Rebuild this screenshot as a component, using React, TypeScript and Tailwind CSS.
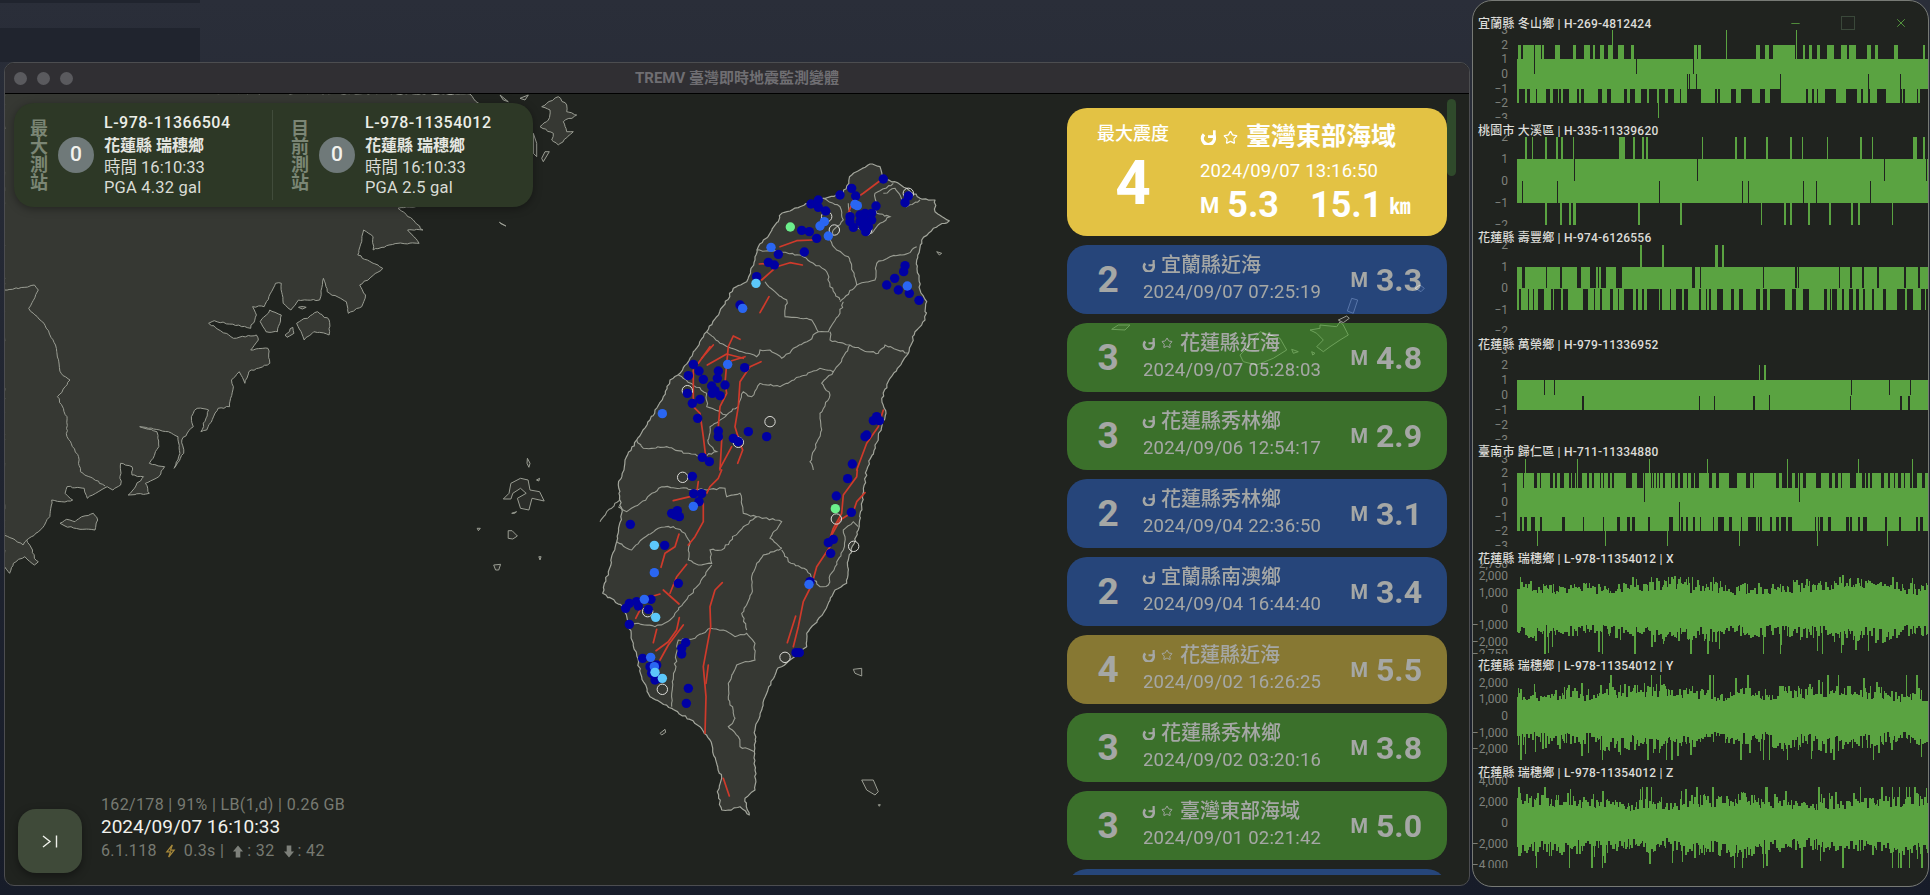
import { Star, Minus, X } from "lucide-react";

type P = [number, number];
const rng = (s: number) => () => {
  s |= 0; s = (s + 0x6d2b79f5) | 0;
  let t = Math.imul(s ^ (s >>> 15), 1 | s);
  t = (t + Math.imul(t ^ (t >>> 7), 61 | t)) ^ t;
  return ((t ^ (t >>> 14)) >>> 0) / 4294967296;
};
const pairs = (a: number[]): P[] => { const o: P[] = []; for (let i = 0; i < a.length; i += 2) o.push([a[i], a[i + 1]]); return o; };
const z6 = (a: number[]) => pairs(a).map(([x, y]): P => [600 + x / 3, 150 + y / 3]);
const z7 = (a: number[]) => pairs(a).map(([x, y]): P => [600 + x / 3, 470 + y / 3]);
const z9 = (a: number[]) => pairs(a).map(([x, y]): P => [x / 2.613, 200 + y / 3]);
const z10 = (a: number[]) => pairs(a).map(([x, y]): P => [420 + x / 3, 90 + y / 3]);
const z11 = (a: number[]) => pairs(a).map(([x, y]): P => [1090 + x / 3, 250 + y / 3]);
const z12 = (a: number[]) => pairs(a).map(([x, y]): P => [x / 3, 500 + y / 3]);

const rough = (pts: P[], seed: number, amp = 0.8, closed = false, step = 4) => {
  const r = rng(seed);
  const list = closed ? [...pts, pts[0]] : pts;
  let d = `M${list[0][0].toFixed(1)} ${list[0][1].toFixed(1)}`;
  for (let i = 1; i < list.length; i++) {
    const [x0, y0] = list[i - 1];
    const [x1, y1] = list[i];
    const len = Math.hypot(x1 - x0, y1 - y0);
    const n = Math.max(1, Math.round(len / step));
    for (let k = 1; k <= n; k++) {
      const t = k / n;
      const j = k === n ? 0 : amp;
      const x = x0 + (x1 - x0) * t + (r() - 0.5) * 2 * j;
      const y = y0 + (y1 - y0) * t + (r() - 0.5) * 2 * j;
      d += `L${x.toFixed(1)} ${y.toFixed(1)}`;
    }
  }
  return d + (closed ? "Z" : "");
};
const plain = (pts: P[], closed = false) =>
  "M" + pts.map(([x, y]) => `${x.toFixed(1)} ${y.toFixed(1)}`).join("L") + (closed ? "Z" : "");

const taiwan: P[] = [
  ...z6([810, 42, 840, 50, 850, 85, 885, 95, 920, 115, 960, 145, 1005, 150, 1005, 185, 1048, 212, 1000, 235, 965, 270, 950, 330, 960, 420, 980, 455, 975, 510, 945, 545, 925, 610, 870, 685, 845, 745, 858, 790, 835, 860, 800, 960]),
  ...z7([785, 110, 775, 180, 745, 270, 740, 340, 705, 360, 670, 430, 620, 490, 620, 530, 530, 600, 500, 670, 465, 780, 465, 900, 465, 960, 435, 985, 448, 1035, 420, 1010, 385, 1020, 365, 1020, 352, 965, 365, 925, 330, 810, 300, 770, 215, 715, 150, 680, 125, 620, 100, 520, 85, 465, 70, 410, 8, 370, 25, 305, 50, 215, 65, 130, 55, 45, 72, 0]),
  ...z6([75, 930, 110, 870, 150, 810, 190, 740, 210, 690, 240, 670, 320, 545, 350, 500, 400, 415, 440, 395, 465, 330, 475, 290, 510, 250, 545, 190, 600, 170, 670, 145, 730, 130, 755, 75]),
];
const counties: P[][] = [
  z6([470, 300, 540, 305, 610, 320, 640, 340, 680, 365, 690, 410, 720, 450]),
  z6([720, 455, 770, 405, 825, 390, 830, 340, 870, 320, 925, 310, 950, 290]),
  z6([670, 145, 720, 170, 730, 210, 700, 240, 690, 270, 710, 300, 745, 320, 755, 350, 770, 405]),
  z6([745, 160, 760, 230, 815, 250, 840, 220, 870, 200, 830, 190, 825, 130, 880, 100]),
  z6([850, 130, 885, 115, 920, 170, 960, 150]),
  z6([320, 545, 360, 580, 470, 620, 480, 600, 510, 600, 545, 625, 590, 590, 630, 570, 655, 545]),
  z6([495, 395, 530, 430, 560, 450, 555, 500, 600, 505, 635, 510, 655, 545, 685, 545, 720, 490, 730, 455]),
  z6([690, 545, 690, 570, 750, 585, 800, 605, 835, 610, 855, 585, 925, 610]),
  z6([750, 585, 720, 640, 700, 665, 660, 655, 600, 680, 540, 710, 480, 700, 455, 740, 430, 725, 415, 770, 380, 795, 320, 770, 320, 730, 235, 675]),
  z6([700, 665, 665, 700, 690, 735, 660, 790, 665, 840, 635, 920, 630, 935, 640, 960]),
  z6([110, 870, 130, 895, 200, 890, 260, 910, 310, 920, 350, 905, 325, 880, 330, 830, 380, 795]),
  z7([55, 110, 80, 125, 120, 100, 185, 50, 240, 55, 320, 60, 375, 55, 380, 80, 420, 70, 430, 130, 470, 140, 525, 150, 545, 155, 510, 205, 545, 235]),
  z7([50, 215, 95, 240, 130, 205, 175, 175, 220, 170, 255, 190, 270, 215, 265, 270, 295, 285, 335, 280, 330, 240, 365, 240, 430, 170, 470, 140]),
  z7([85, 465, 115, 460, 165, 470, 210, 450, 250, 400, 300, 340, 335, 285]),
  z7([215, 710, 215, 670, 235, 510, 285, 505, 330, 475, 370, 480, 405, 500, 440, 490, 465, 520, 465, 570, 410, 585, 385, 640, 385, 680, 405, 745, 385, 770, 415, 800, 420, 830, 465, 845]),
  z7([545, 235, 490, 255, 470, 280, 455, 320, 455, 370, 425, 430, 440, 480]),
  z7([545, 240, 565, 275, 620, 300, 640, 330, 660, 350, 685, 345, 690, 315, 730, 240, 735, 200, 730, 180, 760, 155, 775, 170]),
  z7([0, 155, 20, 125, 60, 90]),
];
const faults: P[][] = [
  z6([850, 85, 790, 130, 760, 150, 745, 190]),
  z6([540, 290, 590, 272, 640, 270]),
  z6([478, 342, 510, 340]),
  z6([485, 390, 530, 350, 570, 338, 607, 345]),
  z6([507, 440, 480, 488]),
  z6([295, 640, 330, 590]),
  z6([305, 625, 340, 585]),
  z6([322, 645, 380, 612, 430, 625]),
  z6([395, 632, 435, 620]),
  z6([420, 568, 400, 558, 385, 590, 380, 640, 375, 700, 380, 730, 360, 770, 355, 830, 365, 870, 360, 960]),
  z6([483, 635, 450, 650, 420, 695, 415, 770, 405, 830, 420, 880, 428, 900, 413, 940]),
  z6([280, 660, 280, 770, 300, 790, 310, 860, 317, 920]),
  z6([850, 780, 835, 830, 800, 880, 770, 960]),
  z6([360, 955, 395, 890]),
  z7([365, 0, 355, 25, 330, 50, 320, 70]),
  z7([295, 35, 290, 70]),
  z7([220, 92, 270, 80, 300, 65]),
  z7([310, 100, 310, 155, 285, 200, 265, 225]),
  z7([237, 192, 225, 230, 195, 250, 183, 292]),
  z7([260, 283, 230, 320, 210, 370]),
  z7([190, 360, 237, 402]),
  z7([160, 378, 180, 372]),
  z7([120, 420, 107, 445]),
  z7([238, 443, 230, 480, 205, 515, 168, 542]),
  z7([250, 465, 205, 525, 180, 570]),
  z7([170, 478, 160, 518]),
  z7([367, 338, 345, 360, 330, 410, 332, 470, 310, 590, 318, 680, 315, 790]),
  z7([325, 585, 318, 640]),
  z7([370, 925, 388, 978]),
  z7([772, 0, 770, 20, 730, 75, 725, 130, 700, 175, 690, 205]),
  z7([795, 68, 770, 95, 760, 125, 720, 150, 695, 195]),
  z7([690, 230, 650, 290, 635, 345, 610, 395, 595, 470, 580, 530]),
  z7([587, 438, 562, 518]),
];
const dark: P[] = [
  ...z6([850, 87, 755, 115, 720, 135, 767, 138, 828, 168, 925, 138, 915, 158, 655, 150, 633, 162, 655, 172, 677, 183, 605, 241, 628, 245, 650, 265, 613, 306, 535, 313, 505, 337, 523, 345, 470, 380, 420, 465, 280, 643, 297, 663, 265, 677, 310, 688, 355, 663, 352, 685, 375, 705, 335, 708, 345, 722, 337, 730, 360, 737, 262, 730, 300, 748, 277, 760, 293, 805, 434, 653, 355, 843, 355, 860, 445, 845, 500, 860, 400, 865, 415, 875, 307, 922, 328, 935, 915, 347, 911, 365, 884, 385, 860, 405, 895, 420, 928, 430, 957, 451, 830, 800, 820, 812, 838, 812, 800, 855, 795, 860, 757, 942, 750, 200, 750, 215, 760, 232, 780, 195, 795, 190, 815, 190, 790, 210, 800, 215, 815, 210, 780, 215, 790, 230, 805, 230, 797, 245]),
  ...z7([277, 19, 281, 71, 305, 71, 297, 95, 215, 130, 232, 122, 238, 140, 225, 135, 91, 163, 194, 226, 235, 340, 153, 388, 110, 395, 88, 400, 77, 415, 115, 408, 145, 418, 88, 463, 257, 518, 245, 535, 245, 552, 128, 565, 170, 585, 150, 590, 155, 610, 165, 630, 180, 625, 265, 655, 259, 700, 743, 26, 709, 78, 754, 127, 700, 208, 685, 218, 692, 250, 630, 335, 588, 548, 598, 548]),
];
const blue: P[] = [
  ...z6([765, 163, 772, 167, 673, 215, 660, 228, 685, 258, 513, 292, 428, 475, 383, 643, 187, 791, 922, 408]),
  ...z7([280, 109, 163, 308, 133, 388, 152, 562, 163, 590, 627, 343]),
];
const light: P[] = [...z6([468, 400]), ...z7([163, 226, 167, 442, 165, 607, 187, 625])];
const green: P[] = [...z6([571, 231]), ...z7([706, 116])];
const rings: P[] = [
  ...z6([925, 130, 703, 240, 680, 200, 262, 722, 510, 815, 415, 877, 800, 240]),
  ...z7([248, 22, 143, 425, 187, 658, 709, 147, 761, 229, 555, 562]),
];

const china: P[] = [
  ...z9([25, 1120, 35, 1090, 65, 1070, 90, 1095, 100, 1085, 90, 1075, 85, 1050, 70, 1020, 105, 990, 130, 950, 135, 900, 160, 905, 190, 900, 170, 880, 175, 860, 220, 865, 228, 895, 250, 880, 280, 860, 295, 870, 315, 855, 315, 790, 345, 800, 345, 825, 375, 830, 335, 885, 390, 880, 380, 850, 415, 830, 430, 800, 390, 790, 415, 740, 410, 695, 365, 680, 440, 695, 465, 710, 470, 760, 455, 805, 480, 760, 475, 720, 505, 680, 500, 650, 515, 625, 545, 630, 525, 695, 540, 690, 570, 625, 600, 620, 610, 560, 605, 540, 625, 515, 640, 550, 650, 515, 705, 490, 700, 445, 655, 450, 675, 420, 670, 405, 610, 415, 545, 370, 560, 362, 655, 385, 670, 345, 660, 320, 690, 320, 720, 250, 735, 250, 740, 310, 760, 330, 780, 300, 835, 300, 845, 235, 855, 275, 905, 305, 910, 340, 945, 320, 955, 285, 940, 255, 1000, 205, 960, 180, 935, 165, 945, 125, 950, 90, 975, 110, 975, 150, 1040, 130, 1095, 130, 1065, 90, 1105, 90, 1080, 60, 1040, 25]),
  [425, 205], [500, 150], [525, 125], [478, 103], [470, 94], [4, 92], [4, 566],
];
const chinaLines: P[][] = [
  z9([10, 270, 65, 262, 90, 255, 100, 270, 75, 325, 115, 370, 145, 435, 160, 520, 183, 540, 150, 590, 175, 650, 175, 710, 205, 770, 210, 815, 275, 858]),
  z9([10, 1005, 40, 1020, 60, 1035, 70, 1020]),
];
const filledIslands: P[][] = [
  z9([680, 365, 705, 330, 735, 345, 725, 395, 695, 395]),
  z9([745, 405, 765, 382, 768, 400, 750, 412]),
  z9([775, 370, 830, 335, 860, 360, 860, 405, 820, 395, 795, 420]),
  z9([780, 322, 800, 322, 790, 327]),
  z12([180, 70, 200, 58, 225, 65, 245, 50, 280, 40, 293, 60, 285, 90, 240, 88, 195, 78]),
  z10([380, 40, 415, 20, 440, 45, 440, 65, 470, 75, 430, 95, 440, 125, 460, 125, 415, 165, 395, 150, 400, 130, 360, 110, 385, 90, 390, 60, 365, 50]),
];
const islets: P[][] = [
  z9([1378, 775, 1385, 790, 1382, 802, 1377, 790]),
  z9([1335, 850, 1360, 835, 1380, 840, 1385, 870, 1410, 875, 1422, 903, 1390, 895, 1382, 930, 1360, 925, 1352, 895, 1375, 880, 1360, 865, 1340, 880, 1335, 897, 1315, 897, 1330, 880]),
  z9([1402, 840, 1410, 835, 1408, 843]),
  z9([1337, 940, 1350, 935, 1345, 940]),
  z9([1247, 985, 1255, 985, 1250, 992]),
  z9([1328, 992, 1338, 992, 1352, 1008, 1340, 1017, 1328, 1015]),
  z9([1408, 1070, 1414, 1070, 1411, 1080]),
  z9([1290, 1095, 1308, 1093, 1303, 1110, 1295, 1110]),
  z9([1305, 67, 1322, 78, 1310, 72]),
  z10([240, 15, 265, 35, 250, 30]),
  z10([300, 25, 325, 15, 315, 30]),
  z10([340, 130, 350, 160, 350, 200, 340, 190]),
  z10([375, 185, 388, 185, 370, 215, 365, 205]),
  z7([760, 598, 785, 595, 785, 618, 765, 610]),
  z7([785, 930, 820, 930, 835, 965, 825, 975, 800, 960]),
  z7([180, 790, 195, 778, 197, 787, 185, 795]),
  z7([835, 1004, 841, 1004, 838, 1009]),
  z6([1010, 305, 1025, 310, 1018, 315]),
  z11([975, 115, 990, 105, 1003, 115, 993, 125]),
  z11([785, 145, 803, 150, 790, 190, 772, 183]),
  z11([745, 210, 770, 198, 778, 205, 760, 218]),
  z11([660, 240, 690, 235, 690, 225, 740, 230, 750, 215, 760, 225, 775, 255, 750, 270, 720, 290, 700, 305, 680, 290, 700, 270, 680, 250]),
  z11([65, 238, 85, 225, 120, 225, 105, 240]),
  z11([450, 315, 470, 295, 510, 245, 570, 265, 590, 300, 550, 325, 500, 345, 460, 335]),
  z11([605, 298, 625, 305, 610, 310]),
  z11([665, 305, 675, 310, 668, 315]),
];

const LINE = "#9a9d93";
const Map = () => (
  <svg className="absolute inset-0 h-full w-full" viewBox="5 94 1464 791">
    <path d={rough(china, 3, 0.8, true, 3)} fill="#363833" stroke={LINE} strokeWidth="1" strokeLinejoin="round" />
    {chinaLines.map((l, i) => <path key={i} d={rough(l, 40 + i, 0.8, false, 3)} fill="none" stroke={LINE} strokeWidth="1" />)}
    {filledIslands.map((l, i) => <path key={i} d={rough(l, 60 + i, 0.8, true, 3)} fill="#363833" stroke={LINE} strokeWidth="1" />)}
    {islets.map((l, i) => <path key={i} d={plain(l, true)} fill="#2b2d29" stroke={LINE} strokeWidth="1" />)}
    <path d={rough(taiwan, 7, 1, true, 3)} fill="#363833" stroke="#a3a69c" strokeWidth="1.2" strokeLinejoin="round" />
    {counties.map((l, i) => <path key={i} d={rough(l, 100 + i, 1, false, 3)} fill="none" stroke={LINE} strokeWidth="1.1" />)}
    {faults.map((l, i) => <path key={i} d={plain(l)} fill="none" stroke="#cf3a2b" strokeWidth="1.7" strokeLinecap="round" strokeLinejoin="round" />)}
    {rings.map(([x, y], i) => <circle key={i} cx={x} cy={y} r="5.2" fill="none" stroke="#dcdcd8" strokeWidth="1" />)}
    {dark.map(([x, y], i) => <circle key={i} cx={x} cy={y} r="4.7" fill="#0000a3" />)}
    {blue.map(([x, y], i) => <circle key={i} cx={x} cy={y} r="4.7" fill="#2a66f2" />)}
    {light.map(([x, y], i) => <circle key={i} cx={x} cy={y} r="4.7" fill="#5cc8fa" />)}
    {green.map(([x, y], i) => <circle key={i} cx={x} cy={y} r="4.7" fill="#6cf08c" />)}
  </svg>
);

const W = 411;
const toPath = (hi: number[], lo: number[], c: number) => {
  let d = "";
  for (let x = 0; x < W; x++) d += `M${x + 0.5} ${(c - hi[x]).toFixed(1)}V${(c + lo[x]).toFixed(1)}`;
  return d;
};
const zx = (a: number[]) => a.map((v) => Math.round((v - 231) / 3));

type Opt = { hiP: number; loP: number; hiList?: number[]; loList?: number[]; topList?: number[]; botList?: number[]; slit?: number; hiZero?: number; loZero?: number; runMax?: number; gapMax?: number };
const digital = (seed: number, unit: number, o: Opt) => {
  const r = rng(seed);
  const hi = new Array(W).fill(unit);
  const lo = new Array(W).fill(unit);
  const rMax = o.runMax ?? 2;
  const gMax = o.gapMax ?? 7;
  if (o.hiList) for (let i = 0; i + 1 < o.hiList.length; i += 2) for (let x = zx([o.hiList[i]])[0]; x <= zx([o.hiList[i + 1]])[0]; x++) if (x >= 0 && x < W) hi[x] = 2 * unit;
  if (o.loList) for (let i = 0; i + 1 < o.loList.length; i += 2) for (let x = zx([o.loList[i]])[0]; x <= zx([o.loList[i + 1]])[0]; x++) if (x >= 0 && x < W) lo[x] = 2 * unit;
  let x = 0;
  while (x < W && o.hiP > 0) { const on = r() < o.hiP; const n = on ? 1 + Math.floor(r() * rMax) : 1 + Math.floor(r() * gMax); if (on) for (let k = 0; k < n && x + k < W; k++) hi[x + k] = 2 * unit; x += n; }
  x = 0;
  while (x < W && o.loP > 0) { const on = r() < o.loP; const n = on ? 1 + Math.floor(r() * rMax) : 1 + Math.floor(r() * gMax); if (on) for (let k = 0; k < n && x + k < W; k++) lo[x + k] = 2 * unit; x += n; }
  if (o.hiZero) { x = 0; while (x < W) { const on = r() < o.hiZero; const n = on ? 1 + Math.floor(r() * 2) : 1 + Math.floor(r() * 12); if (on) for (let k = 0; k < n && x + k < W; k++) hi[x + k] = 0.5; x += n; } }
  if (o.loZero) { x = 0; while (x < W) { const on = r() < o.loZero; const n = on ? 1 + Math.floor(r() * 2) : 1 + Math.floor(r() * 5); if (on) for (let k = 0; k < n && x + k < W; k++) lo[x + k] = 0.5; x += n; } }
  (o.topList ?? []).forEach((v) => { hi[v] = 3 * unit; });
  (o.botList ?? []).forEach((v) => { lo[v] = 3 * unit; });
  if (o.slit) for (let i = 0; i < W; i++) if (r() < o.slit) { if (r() < 0.5) hi[i] = 0.4; else lo[i] = 0.4; }
  return toPath(hi, lo, 46);
};
const noise = (seed: number, hiA: number, loA: number, hiS: number, loS: number, p: number) => {
  const r = rng(seed);
  const hi: number[] = [];
  const lo: number[] = [];
  const ph = r() * 6;
  let x = 0;
  while (x < W) {
    const n = 1 + Math.floor(r() * 2);
    const env = 1 + 0.12 * Math.sin(x / 29 + ph) + 0.06 * Math.sin(x / 7 + ph * 2);
    let h = hiA * env * (0.62 + r() * 0.55);
    let l = loA * env * (0.62 + r() * 0.55);
    if (r() < p) h = Math.min(hiS, h + r() * hiS * 0.6);
    if (r() < p) l = Math.min(loS, l + r() * loS * 0.6);
    for (let k = 0; k < n && x + k < W; k++) { hi[x + k] = h; lo[x + k] = l; }
    x += n;
  }
  hi[zx([634])[0]] = hiS; hi[zx([818])[0]] = hiS;
  lo[zx([487])[0]] = loS; lo[zx([968])[0]] = loS;
  return toPath(hi, lo, 46);
};

type Tick = { t: string; v: number };
const dig = (ns: number[]): Tick[] => ns.map((n) => ({ t: n < 0 ? `−${-n}` : `${n}`, v: n }));
const kt = (ns: number[]): Tick[] => ns.map((n) => ({ t: (n < 0 ? "−" : "") + Math.abs(n).toLocaleString("en-US"), v: n / 1000 }));

const charts: { label: string; ticks: Tick[]; unit: number; d: string }[] = [
  { label: "宜蘭縣 冬山鄉 | H-269-4812424", unit: 14.7, ticks: dig([3, 2, 1, 0, -1, -2, -3]), d: digital(11, 14.7, { hiP: 0, loP: 0.6, runMax: 3, gapMax: 5, hiList: [235, 240, 250, 300, 306, 310, 345, 357, 400, 404, 432, 446, 458, 462, 480, 490, 505, 512, 535, 550, 572, 578, 762, 768, 775, 780, 948, 958, 975, 985, 998, 1062, 1088, 1092, 1108, 1112, 1132, 1136, 1160, 1178, 1204, 1218, 1226, 1245, 1280, 1290, 1305, 1310, 1362, 1370, 1448, 1452], topList: [95, 209, 279], botList: [141], slit: 0.012 }) },
  { label: "桃園市 大溪區 | H-335-11339620", unit: 22, ticks: dig([2, 1, 0, -1, -2]), d: digital(12, 22, { hiP: 0, loP: 0, hiList: [255, 257, 275, 277, 316, 318, 348, 350, 363, 365, 398, 400, 538, 553, 578, 582, 605, 608, 618, 621, 785, 787, 885, 887, 912, 915, 978, 980, 1050, 1052, 1085, 1087, 1160, 1162, 1260, 1262, 1295, 1297, 1420, 1428, 1450, 1453], loList: [316, 318, 360, 364, 386, 390, 400, 404, 595, 597, 720, 722, 962, 964, 1032, 1034, 1050, 1052, 1105, 1107, 1168, 1170, 1234, 1236, 1254, 1256, 1355, 1357], slit: 0.02 }) },
  { label: "花蓮縣 壽豐鄉 | H-974-6126556", unit: 21.5, ticks: dig([2, 1, 0, -1, -2]), d: digital(13, 21.5, { hiP: 0, loP: 0, hiList: [600, 604, 666, 669, 826, 830, 845, 848], hiZero: 0.3, loZero: 0.55 }) },
  { label: "花蓮縣 萬榮鄉 | H-979-11336952", unit: 15, ticks: dig([3, 2, 1, 0, -1, -2, -3]), d: digital(14, 15, { hiP: 0.03, loP: 0, hiZero: 0.03, loZero: 0.05, slit: 0.01 }) },
  { label: "臺南市 歸仁區 | H-711-11334880", unit: 14.5, ticks: dig([3, 2, 1, 0, -1, -2, -3]), d: digital(15, 14.5, { hiP: 0.68, loP: 0.68, runMax: 3, gapMax: 3, topList: [8, 60, 132, 190, 270, 341, 395], botList: [20, 88, 150, 222, 300, 370], slit: 0.008 }) },
  { label: "花蓮縣 瑞穗鄉 | L-978-11354012 | X", unit: 16.3, ticks: kt([2750, 2000, 1000, 0, -1000, -2000, -2750]), d: noise(21, 25, 27, 32, 45, 0.1) },
  { label: "花蓮縣 瑞穗鄉 | L-978-11354012 | Y", unit: 16.6, ticks: kt([2000, 1000, 0, -1000, -2000]), d: noise(22, 26, 28, 41, 44, 0.11) },
  { label: "花蓮縣 瑞穗鄉 | L-978-11354012 | Z", unit: 10.6, ticks: kt([4000, 2000, 0, -2000, -4000]), d: noise(23, 23, 27, 36, 45, 0.1) },
];

const Chart = ({ label, ticks, unit, d }: { label: string; ticks: Tick[]; unit: number; d: string }) => (
  <div className="flex h-[107px] flex-col">
    <div className="relative z-10 h-[16px] pl-[5px] text-[12px] font-medium leading-[24px] tracking-[0.2px] text-[#dcdcd8]">{label}</div>
    <div className="flex h-[91px] overflow-hidden">
      <div className="relative w-[35px] shrink-0">
        {ticks.map((k) => (
          <span key={k.t} className="absolute right-0 whitespace-nowrap text-[12px] leading-[14px] text-[#7f817c]" style={{ top: 46 - k.v * unit - 7 }}>
            {k.t}
          </span>
        ))}
      </div>
      <svg className="ml-[9px] h-[91px] w-[411px] shrink-0" viewBox="0 0 411 91" shapeRendering="crispEdges">
        <path d={d} fill="none" stroke="#5aa341" strokeWidth="1" />
      </svg>
    </div>
  </div>
);

const Replay = ({ size }: { size: number }) => (
  <svg width={size} height={size} viewBox="0 0 24 24" fill="none" stroke="currentColor" strokeWidth="5" className="shrink-0">
    <path d="M6 8A9 9 0 1 0 20 9" />
    <path d="M21.5 2V11.5H12" strokeWidth="4" />
  </svg>
);

const Station = ({ kind, id, pga, first }: { kind: string; id: string; pga: string; first: boolean }) => (
  <div className={`flex items-center ${first ? "w-[258px] pl-[14px]" : "flex-1 pl-[16px]"}`}>
    <div className="h-[72px] w-[18px] text-[18px] font-bold leading-[18px] text-[#7b8675] [writing-mode:vertical-rl]">{kind}</div>
    <div className="ml-[12px] flex h-[36px] w-[36px] items-center justify-center rounded-full bg-[#6f7979] text-[21px] font-medium text-[#f2f2ee]">0</div>
    <div className="ml-[10px] flex flex-col self-start pt-[9px] text-[16.5px] text-[#d9dcd5]">
      <div className="h-[22px] text-[16px] font-medium leading-[22px] tracking-[0.5px] text-[#eceee8]">{id}</div>
      <div className="h-[24px] text-[16px] font-bold leading-[24px] text-[#e4e6e0]">花蓮縣 瑞穗鄉</div>
      <div className="h-[20px] leading-[20px]">時間 16:10:33</div>
      <div className="h-[20px] leading-[20px] tracking-[0.2px]">PGA {pga} gal</div>
    </div>
  </div>
);

const cards = [
  { i: 2, c: "bg-[#2c5db7]", n: "宜蘭縣近海", s: false, t: "2024/09/07 07:25:19", m: "3.3" },
  { i: 3, c: "bg-[#4fa335]", n: "花蓮縣近海", s: true, t: "2024/09/07 05:28:03", m: "4.8" },
  { i: 3, c: "bg-[#4fa335]", n: "花蓮縣秀林鄉", s: false, t: "2024/09/06 12:54:17", m: "2.9" },
  { i: 2, c: "bg-[#2c5db7]", n: "花蓮縣秀林鄉", s: false, t: "2024/09/04 22:36:50", m: "3.1" },
  { i: 2, c: "bg-[#2c5db7]", n: "宜蘭縣南澳鄉", s: false, t: "2024/09/04 16:44:40", m: "3.4" },
  { i: 4, c: "bg-[#cdb142]", n: "花蓮縣近海", s: true, t: "2024/09/02 16:26:25", m: "5.5" },
  { i: 3, c: "bg-[#4fa335]", n: "花蓮縣秀林鄉", s: false, t: "2024/09/02 03:20:16", m: "3.8" },
  { i: 3, c: "bg-[#4fa335]", n: "臺灣東部海域", s: true, t: "2024/09/01 02:21:42", m: "5.0" },
  { i: 2, c: "bg-[#2c5db7]", n: "宜蘭縣近海", s: false, t: "2024/08/31 21:10:05", m: "3.0" },
];

const Card = ({ c }: { c: (typeof cards)[number] }) => (
  <div className={`flex h-[69px] shrink-0 rounded-[20px] text-white opacity-60 ${c.c}`}>
    <div className="flex w-[76px] items-center justify-center pl-[6px] text-[37px] font-bold">{c.i}</div>
    <div className="flex flex-1 flex-col pt-[7px]">
      <div className="flex h-[26px] items-center text-[20px] font-medium leading-[26px]">
        <span className="ml-[-1px] mr-[6px]"><Replay size={13} /></span>
        {c.s && <Star size={12} strokeWidth={2} className="mr-[7px] shrink-0" />}
        {c.n}
      </div>
      <div className="h-[28px] text-[18.5px] leading-[28px] tracking-[0.2px]">{c.t}</div>
    </div>
    <div className="mr-[25px] flex items-center">
      <span className="mr-[8px] text-[20px] font-bold">M</span>
      <span className="text-[32px] font-bold">{c.m}</span>
    </div>
  </div>
);

export default function App() {
  return (
    <div className="relative h-[895px] w-[1930px] overflow-hidden bg-gradient-to-b from-[#2a2e39] to-[#171c29] font-['Roboto','Noto_Sans_CJK_TC',sans-serif]">
      <div className="absolute left-0 top-0 h-[3px] w-[200px] bg-[#20242e]" />
      <div className="absolute left-0 top-[28px] h-[34px] w-[200px] bg-[#20242e]" />

      <div className="absolute left-[4px] top-[62px] flex h-[824px] w-[1466px] flex-col overflow-hidden rounded-[10px] border border-[#4c4d50] bg-[#20231f]">
        <div className="relative flex h-[31px] shrink-0 items-center justify-center border-b border-black bg-[#302f33] text-[15px] font-bold text-[#6f6e72]">
          <div className="absolute left-[9px] top-[9px] flex gap-[10px]">
            <div className="h-[13px] w-[13px] rounded-full bg-[#5a5a5e]" />
            <div className="h-[13px] w-[13px] rounded-full bg-[#5a5a5e]" />
            <div className="h-[13px] w-[13px] rounded-full bg-[#5a5a5e]" />
          </div>
          TREMV 臺灣即時地震監測變體
        </div>
        <div className="relative flex-1">
          <Map />

          <div className="absolute left-[9px] top-[9px] flex h-[104px] w-[519px] rounded-[20px] bg-[#2d3826] shadow-[0_2px_8px_rgba(0,0,0,0.35)]">
            <Station first kind="最大測站" id="L-978-11366504" pga="4.32" />
            <div className="my-[7px] w-px bg-[#414c3b]" />
            <Station first={false} kind="目前測站" id="L-978-11354012" pga="2.5" />
          </div>

          <div className="absolute bottom-[12px] left-[13px] flex items-end">
            <div className="flex h-[64px] w-[64px] items-center justify-center rounded-[18px] bg-[#3f4a39] shadow-[0_3px_8px_rgba(0,0,0,0.4)]">
              <svg width="16" height="13" viewBox="0 0 16 13" fill="none" stroke="#eef0ea" strokeWidth="1.4">
                <path d="M1 1l7 5.5L1 12" />
                <path d="M14.5 0.5v12" />
              </svg>
            </div>
            <div className="mb-[9px] ml-[19px] flex flex-col text-[#777a72]">
              <div className="h-[22px] text-[16px] leading-[22px] tracking-[0.35px]">162/178 | 91% | LB(1,d) | 0.26 GB</div>
              <div className="h-[22px] text-[19px] leading-[22px] text-[#f0f1ec]">2024/09/07 16:10:33</div>
              <div className="flex h-[26px] items-center text-[16px] tracking-[0.35px]">
                <span>6.1.118</span>
                <svg width="13" height="16" viewBox="0 0 14 15" className="mx-[7px]" fill="none" stroke="#a98a3a" strokeWidth="1.3"><path d="M9 1 L3 8.5 H7 L5 14 L11 6.5 H7 Z" /></svg>
                <span>0.3s |</span>
                <svg width="12" height="15" viewBox="0 0 13 15" className="ml-[8px]" fill="#7d807a"><path d="M6.5 1 L12 7.5 H9 V14 H4 V7.5 H1 Z" /></svg>
                <span className="ml-[3px]">: 32</span>
                <svg width="12" height="15" viewBox="0 0 13 15" className="ml-[8px]" fill="#7d807a"><path d="M6.5 14 L12 7.5 H9 V1 H4 V7.5 H1 Z" /></svg>
                <span className="ml-[3px]">: 42</span>
              </div>
            </div>
          </div>

          <div className="absolute bottom-[10px] right-[22px] top-[14px] flex w-[380px] flex-col gap-[9px] overflow-hidden">
            <div className="flex h-[128px] shrink-0 rounded-[20px] bg-[#e3c244] text-white">
              <div className="flex w-[132px] shrink-0 flex-col items-center pt-[13px]">
                <div className="h-[26px] text-[18px] font-medium leading-[26px]">最大震度</div>
                <div className="h-[72px] text-[62px] font-bold leading-[72px]">4</div>
              </div>
              <div className="flex flex-col pl-[1px] pt-[12px]">
                <div className="flex h-[34px] items-center text-[25px] font-bold">
                  <Replay size={16} />
                  <Star size={15} strokeWidth={2} className="ml-[7px] mr-[8px] shrink-0" />
                  臺灣東部海域
                </div>
                <div className="h-[34px] text-[18.5px] leading-[34px] tracking-[0.2px]">2024/09/07 13:16:50</div>
                <div className="flex h-[34px] items-center font-bold">
                  <span className="mr-[8px] text-[22px]">M</span>
                  <span className="text-[36px]">5.3</span>
                  <span className="ml-[31px] text-[36px]">15.1</span>
                  <span className="ml-[7px] font-['Noto_Sans_CJK_TC',sans-serif] text-[21px]">㎞</span>
                </div>
              </div>
            </div>
            {cards.map((c, i) => <Card key={i} c={c} />)}
          </div>

          <div className="absolute right-[13px] top-[5px] h-[77px] w-[9px] rounded-full bg-[#2f4a2b]" />
        </div>
      </div>

      <div className="absolute left-[1472px] top-0 flex h-[887px] w-[457px] flex-col overflow-hidden rounded-[20px] border border-[#777a75] bg-[#20231f] pt-[11px]">
        {charts.map((c) => <Chart key={c.label} {...c} />)}
        <div className="absolute right-[20px] top-[15px] flex items-center text-[#5aa341]">
          <Minus size={13} strokeWidth={1.5} />
          <div className="ml-[39px] h-[14px] w-[14px] border border-[#3a483a]" />
          <X size={14} strokeWidth={1.5} className="ml-[39px]" />
        </div>
      </div>
    </div>
  );
}
